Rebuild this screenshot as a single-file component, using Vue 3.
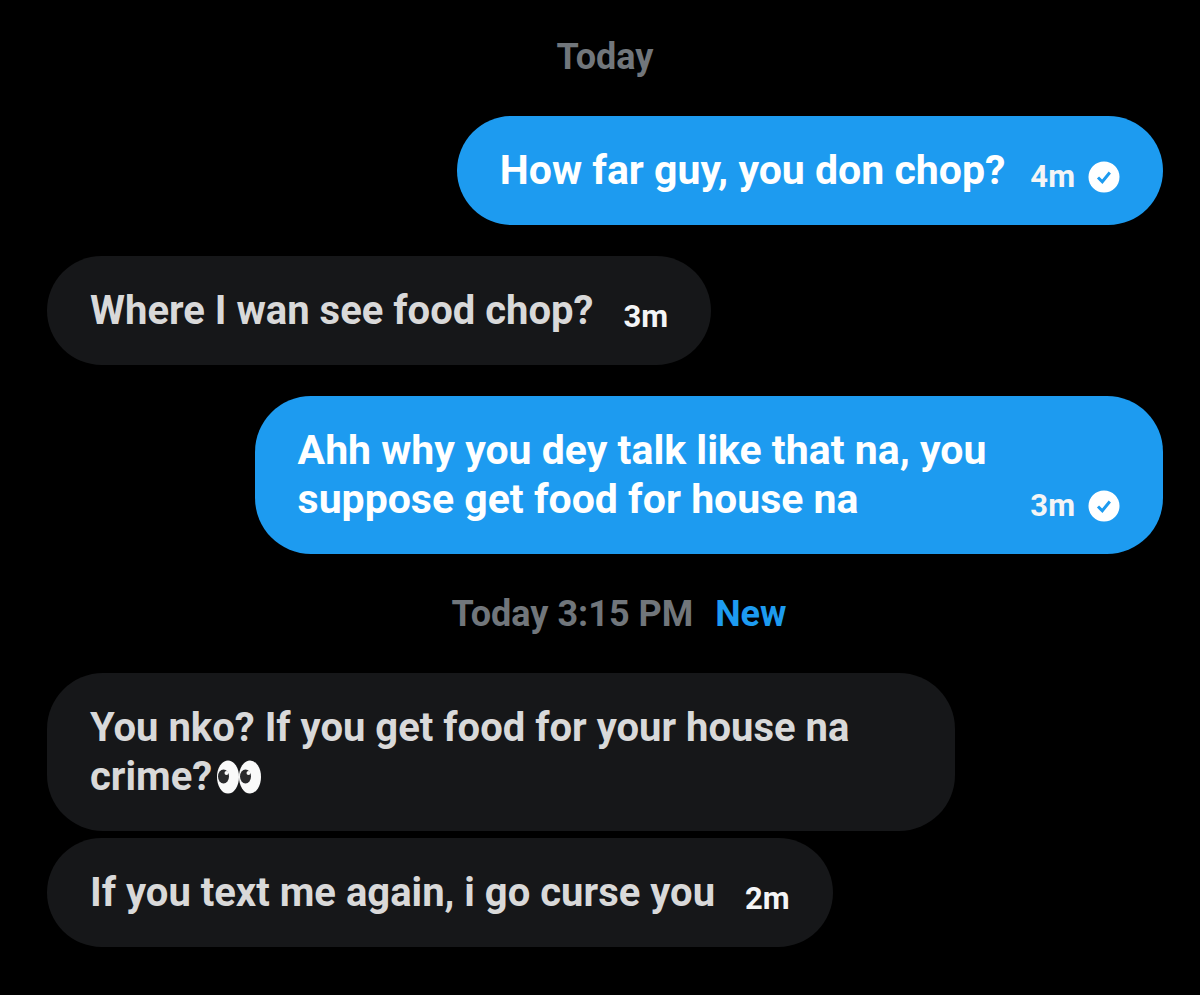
<script setup>
const messages = [
  { id: 1, kind: 'divider', text: 'Today' },
  { id: 2, kind: 'sent', text: 'How far guy, you don chop?', time: '4m' },
  { id: 3, kind: 'received', text: 'Where I wan see food chop?', time: '3m' },
  { id: 4, kind: 'sent', text: 'Ahh why you dey talk like that na, you suppose get food for house na', time: '3m' },
  { id: 5, kind: 'divider', text: 'Today 3:15 PM', badge: 'New' },
  { id: 6, kind: 'received', text: 'You nko? If you get food for your house na crime?', eyes: true },
  { id: 7, kind: 'received', text: 'If you text me again, i go curse you', time: '2m', grouped: true }
]
</script>

<template>
  <main class="chat">
    <template v-for="m in messages" :key="m.id">
      <h2 v-if="m.kind === 'divider'" class="divider" :class="{ unread: m.badge }">
        <span>{{ m.text }}</span>
        <span v-if="m.badge" class="badge">{{ m.badge }}</span>
      </h2>
      <article v-else class="bubble" :class="[m.kind, { grouped: m.grouped }]">
        <p class="text">{{ m.text }}<svg v-if="m.eyes" class="eyes" viewBox="0 0 46 36" role="img" aria-label="eyes">
          <ellipse cx="12" cy="18" rx="11" ry="16.5" fill="#fafafa" />
          <ellipse cx="34" cy="18" rx="11" ry="16.5" fill="#fafafa" />
          <ellipse cx="7.5" cy="17.5" rx="5.5" ry="7" fill="#2b2b2d" />
          <ellipse cx="29.5" cy="17.5" rx="5.5" ry="7" fill="#2b2b2d" />
          <circle cx="10.5" cy="14" r="2" fill="#fafafa" />
          <circle cx="32.5" cy="14" r="2" fill="#fafafa" />
        </svg></p>
        <footer v-if="m.time" class="meta">
          <time>{{ m.time }}</time>
          <svg v-if="m.kind === 'sent'" class="check" viewBox="0 0 32 32" role="img" aria-label="Sent">
            <circle cx="16" cy="16" r="15.5" fill="#fff" />
            <path d="M10 16.5 L14.3 20.7 L21.8 11.5" fill="none" stroke="#1d9bf0" stroke-width="3" />
          </svg>
        </footer>
      </article>
    </template>
  </main>
</template>

<style>
body {
  background: #000;
}
</style>

<style scoped>
.chat {
  display: flex;
  flex-direction: column;
  min-height: 100vh;
  box-sizing: border-box;
  padding: 36px 37px 47px 47px;
  background: #000;
  font-family: Roboto, "Liberation Sans", sans-serif;
  font-weight: 700;
}
.divider {
  display: flex;
  justify-content: center;
  gap: 22px;
  margin: 0 0 38px;
  font-size: 36px;
  font-weight: 700;
  line-height: 42px;
  color: #71767b;
}
.bubble + .divider {
  margin-top: 39px;
}
.unread {
  padding-left: 28px;
}
.badge {
  color: #1d9bf0;
}
.bubble {
  display: flex;
  align-items: flex-end;
  gap: 25px;
  box-sizing: border-box;
  max-width: 81.4%;
  padding: 30px 43px;
  border-radius: 56px;
}
.bubble + .bubble {
  margin-top: 31px;
}
.bubble + .bubble.grouped {
  margin-top: 7px;
}
.sent {
  align-self: flex-end;
  background: #1d9bf0;
  color: #fff;
}
.received {
  gap: 30px;
  align-self: flex-start;
  background: #161719;
  color: #d9d9d9;
}
.text {
  margin: 0;
  font-size: 41px;
  line-height: 49px;
}
.received .text {
  font-size: 40px;
}
.meta {
  display: flex;
  align-items: center;
  gap: 13px;
  font-size: 31px;
  line-height: 36px;
  color: #f4f5f6;
}
.check {
  width: 32px;
  height: 32px;
}
.eyes {
  width: 46px;
  height: 36px;
  margin-left: 4px;
  vertical-align: -5px;
}
</style>
